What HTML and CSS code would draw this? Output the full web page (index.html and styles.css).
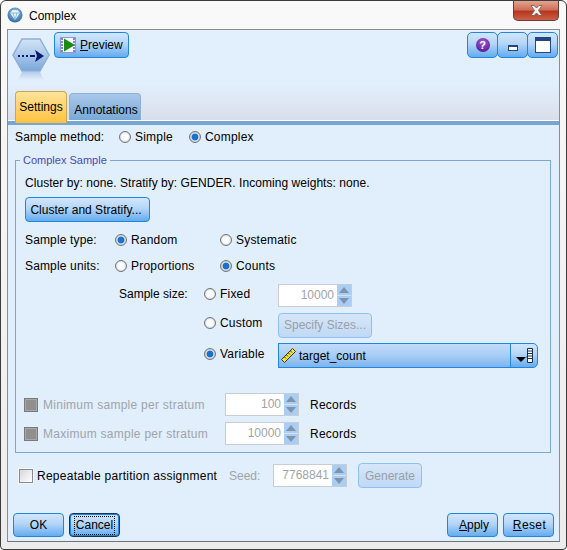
FILE: index.html
```html
<!DOCTYPE html>
<html lang="en">
<head>
<meta charset="utf-8">
<title>Complex</title>
<link rel="stylesheet" href="styles.css">
</head>
<body>
<div class="window">
  <div class="titlebar">
    <svg class="app-icon" width="16" height="16" viewBox="0 0 16 16"><defs><radialGradient id="ai" cx="50%" cy="35%" r="65%"><stop offset="0" stop-color="#9fc6e2"/><stop offset="1" stop-color="#2a6ea6"/></radialGradient></defs><circle cx="8" cy="8" r="7.500" fill="url(#ai)"/><path d="M3.500 6 5.500 3.500h5L12.500 6 8 12.500z" fill="#e6f2fa" stroke="#fff" stroke-width=".6"/><path d="M3.500 6h9M6 6l2 6.500L10 6" fill="none" stroke="#6fa3c9" stroke-width=".7"/></svg>
    <span class="title-text">Complex</span>
    <div class="close-btn"><svg width="13" height="11" viewBox="0 0 13 11"><path d="M1 .5h3L6.500 3 9 .5h3L8.500 5.500 12 10.500H9L6.500 8 4 10.500H1l3.500-5z" fill="#f4f1ee" stroke="#6b5a55" stroke-width=".8"/></svg></div>
  </div>
  <div class="client">
    <div class="head">
      <div class="head-top">
        <svg class="node-icon" width="38" height="46" viewBox="0 0 38 46"><defs><linearGradient id="hx" x1="0" y1="0" x2="0" y2="1"><stop offset="0" stop-color="#d5e3f5"/><stop offset=".5" stop-color="#a9c8ea"/><stop offset="1" stop-color="#79a6d8"/></linearGradient><linearGradient id="rf" x1="0" y1="0" x2="0" y2="1"><stop offset="0" stop-color="#b4cdea"/><stop offset="1" stop-color="#e3eefb"/></linearGradient></defs><path d="M10 2h18l9 16-9 16H10L1 18z" fill="url(#hx)" stroke="#8fb0d6" stroke-width="1.500"/><path d="M10 35h18l4 8H6z" fill="url(#rf)"/><path d="M6 19h2M10 19h2M14 19h2M18 19h5" stroke="#0b1a70" stroke-width="2" fill="none"/><path d="M23 13l9 6-9 6 2-6z" fill="#0b1a70"/></svg>
        <button class="btn preview-btn" type="button">
          <svg width="16" height="16" viewBox="0 0 16 16"><rect x=".5" y=".5" width="15" height="15" fill="#f4f7fd" stroke="#8d9bd0"/><path d="M1 2h2M1 5h2M1 8h2M1 11h2M1 14h2M13 2h2M13 5h2M13 8h2M13 11h2M13 14h2" stroke="#5763ad" stroke-width="1.500"/><path d="M4 1.500 15 8 4 14.500z" fill="#1f8a14"/></svg>
          <span><u>P</u>review</span>
        </button>
        <div class="win-btns">
          <button class="btn win-btn" type="button"><span class="help">?</span></button>
          <button class="btn win-btn" type="button"><span class="min-ico"></span></button>
          <button class="btn win-btn" type="button"><span class="max-ico"></span></button>
        </div>
      </div>
      <div class="tabs">
        <div class="tab tab-active">Settings</div>
        <div class="tab tab-idle">Annotations</div>
      </div>
    </div>
    <div class="tab-strip"></div>
    <div class="body">
      <div class="row method-row">
        <span class="method-label">Sample method:</span>
        <label class="radio method-simple"><i class="dot"></i>Simple</label>
        <label class="radio"><i class="dot on"></i>Complex</label>
      </div>
      <section class="group">
        <div class="legend">Complex Sample</div>
        <div class="summary">Cluster by: none. Stratify by: GENDER. Incoming weights: none.</div>
        <button class="btn cluster-btn" type="button">Cluster and Stratify...</button>
        <div class="row type-row">
          <span class="field-label">Sample type:</span>
          <label class="radio col-a"><i class="dot on"></i>Random</label>
          <label class="radio"><i class="dot"></i>Systematic</label>
        </div>
        <div class="row units-row">
          <span class="field-label">Sample units:</span>
          <label class="radio col-a"><i class="dot"></i>Proportions</label>
          <label class="radio"><i class="dot on"></i>Counts</label>
        </div>
        <div class="size-grid">
          <span class="size-label">Sample size:</span>
          <label class="radio lift-s"><i class="dot"></i>Fixed</label>
          <div class="spin spin-fixed"><span class="spin-val">10000</span><span class="arrows"><b class="up"></b><b class="down"></b></span></div>
          <label class="radio size-c2 lift-l"><i class="dot"></i>Custom</label>
          <button class="btn disabled specify" type="button">Specify Sizes...</button>
          <label class="radio size-c2 lift"><i class="dot on"></i>Variable</label>
          <div class="var-wrap">
            <div class="var-field">
              <svg width="17" height="17" viewBox="0 0 17 17"><path d="M1.500 12.500 12.500 1.500l3 3-11 11z" fill="#f4e23a" stroke="#3a3a20" stroke-width="1"/><path d="M4.500 10l1.500 1.500M6.500 8 8 9.500M8.500 6l1.500 1.500M10.500 4 12 5.500" stroke="#3a3a20"/></svg>
              <span>target_count</span>
            </div>
            <button class="btn var-pick" type="button"><svg width="17" height="15" viewBox="0 0 17 15"><path d="M0 9h10L5 14z" fill="#000"/><path d="M10.500 9h1" stroke="#000"/><path d="M11.500 .5h5v14h-5z" fill="#fff" stroke="#14304f"/><path d="M12 3h4M12 5.500h4M12 8h4M12 10.500h4" stroke="#14304f"/></svg></button>
          </div>
        </div>
        <div class="row strat-row strat-first">
          <i class="check-dis"></i><span class="strat-label">Minimum sample per stratum</span>
          <div class="spin spin-strat"><span class="spin-val">100</span><span class="arrows"><b class="up"></b><b class="down"></b></span></div>
          <span class="records">Records</span>
        </div>
        <div class="row strat-row">
          <i class="check-dis"></i><span class="strat-label">Maximum sample per stratum</span>
          <div class="spin spin-strat"><span class="spin-val">10000</span><span class="arrows"><b class="up"></b><b class="down"></b></span></div>
          <span class="records">Records</span>
        </div>
      </section>
      <div class="row seed-row">
        <i class="check"></i><span class="repeat-label">Repeatable partition assignment</span>
        <span class="seed-label">Seed:</span>
        <div class="spin spin-seed"><span class="spin-val">7768841</span><span class="arrows"><b class="up"></b><b class="down"></b></span></div>
        <button class="btn disabled generate" type="button">Generate</button>
      </div>
      <div class="footer">
        <button class="btn foot-btn" type="button">OK</button>
        <button class="btn foot-btn cancel" type="button"><span>Cancel</span></button>
        <span class="spacer"></span>
        <button class="btn foot-btn apply" type="button"><span><u>A</u>pply</span></button>
        <button class="btn foot-btn reset" type="button"><span><u>R</u>eset</span></button>
      </div>
    </div>
  </div>
</div>
</body>
</html>
```
FILE: styles.css
```css
* { box-sizing: border-box; }
html, body { margin: 0; padding: 0; }
body {
  width: 567px; height: 550px; overflow: hidden;
  font: 12px/14px "Liberation Sans", Arial, sans-serif;
  color: #000; background: #fff;
}
.window {
  width: 567px; height: 550px; padding: 0 7px 7px 7px;
  background: linear-gradient(#f9f9f9, #ececec);
  border: 1px solid #3c3c3c; border-radius: 6px 6px 4px 4px;
  display: flex; flex-direction: column;
}
.titlebar { height: 28px; flex: none; display: flex; align-items: center; margin-left: -1px; }
.title-text { margin-left: 6px; margin-top: 1px; }
.close-btn {
  margin-left: auto; margin-right: 0; align-self: flex-start; width: 46px; height: 20px;
  background: linear-gradient(#e2a58f 0, #d0705a 45%, #b9371e 55%, #c8614a 100%);
  border: 1px solid #6b3b36; border-top: 0; border-radius: 0 0 5px 5px;
  display: flex; align-items: center; justify-content: center;
}
.client {
  flex: 1; display: flex; flex-direction: column; min-height: 0;
  border: 1px solid #8a8e94; border-bottom-color: #6f7377; background: #e1eefb; margin: 0 -1px;
}
.head { height: 90px; flex: none; background: linear-gradient(#e2effd 0, #e2effd 60%, #dadeea 100%); display: flex; flex-direction: column; }
.head-top { display: flex; padding: 2px 1px 0 4px; height: 61px; }
.node-icon { margin-top: 5px; flex: none; margin-right: -1px; }
.btn {
  font: inherit; color: #000; padding: 0; cursor: default;
  border: 1px solid #1f86dc; border-radius: 4px;
  background: linear-gradient(#d2e6fb 0, #b4d5f8 45%, #9ccaf6 60%, #66abee 100%);
  display: inline-flex; align-items: center; justify-content: center;
}
.preview-btn { width: 75px; height: 26px; margin-left: 5px; gap: 4px; padding-left: 5px; justify-content: flex-start; }
.win-btns { margin-left: auto; display: flex; }
.win-btn { width: 31px; height: 26px; margin-left: -1px; border-radius: 5px; }
.help { width: 14px; height: 14px; border-radius: 50%; background: radial-gradient(circle at 50% 30%, #a45cd0, #4a0a90); color: #fff; font: bold 11px/14px "Liberation Sans", sans-serif; text-align: center; }
.min-ico { width: 10px; height: 6px; margin-top: 6px; border: 1px solid #23467e; border-top-width: 2px; background: #fff; }
.max-ico { width: 16px; height: 16px; border: 1px solid #23467e; border-top-width: 4px; background: #fff; }
.tabs { display: flex; align-items: flex-end; padding-left: 7px; height: 29px; gap: 2px; }
.tab { border-radius: 4px 4px 0 0; display: flex; align-items: center; justify-content: center; }
.tab-active { width: 52px; height: 32px; background: linear-gradient(#ffe39a, #ffc23f); border: 1px solid #c9a84f; border-bottom: 0; position: relative; z-index: 1; margin-bottom: -3px; padding-bottom: 1px; }
.tab-idle { width: 72px; height: 27px; background: linear-gradient(#a9c8ea, #79a9d6); border: 1px solid #8fb0d6; border-bottom: 0; padding: 5px 0 0 2px; }
.tab-strip { height: 5px; flex: none; background: #77a6d3; border-top: 1px solid #fff; }
.body { flex: 1; display: flex; flex-direction: column; padding: 0 8px 0 7px; min-height: 0; }
.row { display: flex; align-items: center; }
.radio { display: inline-flex; align-items: center; gap: 4px; white-space: nowrap; letter-spacing: .2px; }
.dot {
  width: 12px; height: 12px; border-radius: 50%; flex: none;
  border: 1px solid #6f757c; background: radial-gradient(circle, #fff 0 40%, #b4c0cc 100%);
}
.dot.on { background: radial-gradient(circle, #1a72cc 0 44%, #cfd9e4 52%, #c2ccd6 100%); }
.method-row { height: 22px; margin-top: 1px; }
.method-label { width: 104px; letter-spacing: .14px; }
.method-simple { width: 70px; }
.group { border: 1px solid #7ea6d3; margin-top: 12px; height: 293px; padding: 0 9px; flex: none; position: relative; }
.legend { position: absolute; top: -7px; left: 4px; padding: 0 3px; background: #e1eefb; color: #4a4ab2; font-size: 11px; line-height: 13px; }
.summary { margin-top: 15px; height: 14px; letter-spacing: .05px; }
.cluster-btn { width: 125px; height: 25px; margin-top: 7px; display: flex; padding-right: 3px; }
.type-row { margin-top: 8px; height: 20px; }
.units-row { margin-top: 6px; height: 20px; }
.field-label { width: 90px; letter-spacing: .15px; }
.col-a { width: 105px; }
.size-grid { display: grid; grid-template-columns: 85px 74px 260px; grid-template-rows: 30px 30px 31px; margin-top: 4px; margin-left: 94px; align-items: center; }
.size-label { margin-bottom: 2px; }
.size-c2 { grid-column: 2; }
.lift-s { margin-bottom: 2px; }
.lift-l { margin-bottom: 4px; }
.lift { margin-bottom: 3px; }
.spin { display: flex; border: 1px solid #c9cdd2; background: #fff; height: 23px; flex: none; }
.spin-val { flex: 1; text-align: right; color: #a0a4a8; line-height: 21px; padding-right: 3px; }
.arrows { width: 14px; background: #a8cdf6; display: flex; flex-direction: column; }
.arrows b { flex: 1; display: flex; align-items: center; justify-content: center; }
.arrows .up::after { content: ""; border: 5px solid transparent; border-top: 0; border-bottom: 6px solid #7f94ab; }
.arrows .down::after { content: ""; border: 5px solid transparent; border-bottom: 0; border-top: 6px solid #7f94ab; }
.arrows .down { border-top: 1px solid #d6e2ee; }
.spin-fixed { width: 74px; }
.disabled { color: #9a9fa5; background: linear-gradient(#d7e6f7, #bfd9f5); border-color: #8fc0ee; }
.specify { width: 94px; height: 25px; }
.var-wrap { display: flex; height: 25px; width: 260px; }
.var-field { width: 233px; height: 25px; display: flex; align-items: center; gap: 2px; padding-left: 1px; background: linear-gradient(#c3dcf8, #a6cdf5 50%, #7cb4ee); border: 1px solid #1f86dc; }
.var-pick { width: 28px; height: 25px; border-radius: 0 5px 5px 0; margin-left: -1px; }
.strat-row { height: 29px; }
.strat-first { margin-top: 19px; }
.check-dis { width: 14px; height: 14px; margin-left: -1px; flex: none; background: #8f8f8f; border: 1px solid #7a7a7a; box-shadow: inset 0 0 0 1px #a8a8a8; }
.strat-label { width: 182px; margin-left: 5px; color: #a0a4aa; white-space: nowrap; letter-spacing: .27px; }
.spin-strat { width: 74px; }
.records { margin-left: 11px; letter-spacing: .25px; }
.seed-row { margin-top: 8px; height: 29px; padding-left: 4px; }
.check { width: 14px; height: 14px; flex: none; background: linear-gradient(135deg, #d5d8dc, #fff); border: 1px solid #868a8e; box-shadow: 0 0 0 1px #f4f6f8; }
.repeat-label { margin-left: 4px; width: 192px; white-space: nowrap; letter-spacing: .26px; }
.seed-label { color: #a0a4aa; width: 44px; }
.spin-seed { width: 74px; }
.generate { width: 64px; height: 25px; margin-left: 11px; }
.footer { display: flex; margin: 23px -3px 0 -2px; gap: 5px; }
.foot-btn { width: 51px; height: 24px; }
.spacer { flex: 1; }
.cancel { border: 1px solid #12345a; box-shadow: inset 0 0 0 1px #1f86dc; }
.cancel span { outline: 1px dotted #000; padding: 1px 1px 2px; }
.apply { padding-left: 3px; }
.reset { padding-left: 2px; letter-spacing: .4px; }
```
